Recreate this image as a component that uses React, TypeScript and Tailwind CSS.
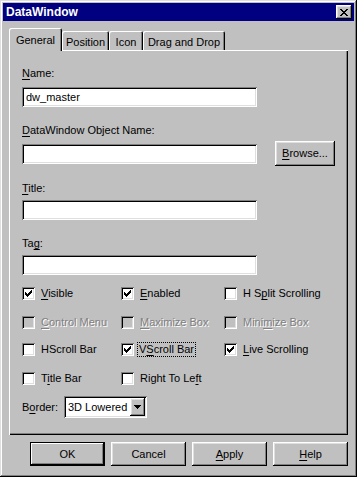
import React from "react";

const raised =
  "shadow-[inset_-1px_-1px_#000,inset_1px_1px_#fff,inset_-2px_-2px_#808080,inset_2px_2px_#dfdfdf]";
const sunken =
  "shadow-[inset_1px_1px_#808080,inset_-1px_-1px_#fff,inset_2px_2px_#000,inset_-2px_-2px_#dfdfdf]";
const embossed = "text-[#808080] [text-shadow:1px_1px_0_#fff]";

function Acc({ text, at }: { text: string; at: number }) {
  if (at < 0) return <>{text}</>;
  return (
    <>
      {text.slice(0, at)}
      <span className="underline underline-offset-[2px]">{text[at]}</span>
      {text.slice(at + 1)}
    </>
  );
}

function CheckMark() {
  return (
    <svg width="7" height="7" viewBox="0 0 7 7" shapeRendering="crispEdges">
      <path
        fill="#000"
        d="M6 0h1v1h-1z M5 1h2v1h-2z M0 2h1v1h-1z M4 2h3v1h-3z M0 3h2v1h-2z M3 3h3v1h-3z M0 4h5v1h-5z M1 5h3v1h-3z M2 6h1v1h-1z"
      />
    </svg>
  );
}

type Box = { label: string; at: number; checked?: boolean; disabled?: boolean; focus?: boolean };

function Check({ label, at, checked, disabled, focus }: Box) {
  return (
    <div className="flex h-[13px] items-center gap-[6px]">
      <div
        className={`flex h-[13px] w-[13px] shrink-0 items-center justify-center ${sunken} ${
          disabled ? "bg-[#c0c0c0]" : "bg-white"
        }`}
      >
        {checked ? <CheckMark /> : null}
      </div>
      <span
        className={`whitespace-nowrap leading-[13px] ${disabled ? embossed : "text-black"} ${
          focus ? "outline outline-1 outline-dotted outline-black px-[1px] -ml-[2px]" : ""
        }`}
      >
        <Acc text={label} at={at} />
      </span>
    </div>
  );
}

const rows: Box[][] = [
  [
    { label: "Visible", at: 0, checked: true },
    { label: "Enabled", at: 0, checked: true },
    { label: "H Split Scrolling", at: 3 },
  ],
  [
    { label: "Control Menu", at: 0, disabled: true },
    { label: "Maximize Box", at: 0, disabled: true },
    { label: "Minimize Box", at: 4, disabled: true },
  ],
  [
    { label: "HScroll Bar", at: -1 },
    { label: "VScroll Bar", at: 1, checked: true, focus: true },
    { label: "Live Scrolling", at: 0, checked: true },
  ],
  [
    { label: "Title Bar", at: 1 },
    { label: "Right To Left", at: 11 },
  ],
];

const rowGaps = ["mt-[12px]", "mt-[16px]", "mt-[14px]", "mt-[16px]"];

function Field({ value = "" }: { value?: string }) {
  return (
    <div className={`flex h-[20px] w-[235px] items-center bg-white pl-[4px] ${sunken}`}>
      <span className="leading-[13px]">{value}</span>
    </div>
  );
}

function Label({ text, at, className = "" }: { text: string; at: number; className?: string }) {
  return (
    <div className={`h-[13px] leading-[13px] ${className}`}>
      <Acc text={text} at={at} />
    </div>
  );
}

const tabs = [
  { name: "General", w: "w-[53px]" },
  { name: "Position", w: "w-[47px]" },
  { name: "Icon", w: "w-[34px]" },
  { name: "Drag and Drop", w: "w-[82px]" },
];

const buttons = [
  { name: "OK", at: -1, def: true },
  { name: "Cancel", at: -1 },
  { name: "Apply", at: 0 },
  { name: "Help", at: 0 },
];

export default function App() {
  return (
    <div
      className={`flex h-[477px] w-[357px] flex-col bg-[#c0c0c0] p-[3px] text-[11px] text-black shadow-[inset_-1px_-1px_#000,inset_1px_1px_#dfdfdf,inset_-2px_-2px_#808080,inset_2px_2px_#fff] [font-family:'Liberation_Sans',Arial,sans-serif]`}
    >
      {/* title bar */}
      <div className="flex h-[18px] items-center justify-between bg-[#000080] pl-[3px] pr-[2px]">
        <span className="text-[12px] font-bold leading-none text-white">DataWindow</span>
        <div className={`flex h-[14px] w-[16px] items-center justify-center bg-[#c0c0c0] ${raised}`}>
          <svg width="8" height="7" viewBox="0 0 8 7" shapeRendering="crispEdges">
            <path
              fill="#000"
              d="M0 0h2v1h-2z M6 0h2v1h-2z M1 1h2v1h-2z M5 1h2v1h-2z M2 2h4v1h-4z M3 3h2v1h-2z M2 4h4v1h-4z M1 5h2v1h-2z M5 5h2v1h-2z M0 6h2v1h-2z M6 6h2v1h-2z"
            />
          </svg>
        </div>
      </div>

      {/* tabs */}
      <div className="ml-[6px] mr-[6px] mt-[7px] flex h-[23px] items-end">
        {tabs.map((t, i) =>
          i === 0 ? (
            <div
              key={t.name}
              className={`flex h-[23px] ${t.w} items-start justify-center rounded-t-[2px] pt-[4px] shadow-[inset_1px_1px_#fff,inset_-1px_0_#000,inset_-2px_0_#808080]`}
            >
              General
            </div>
          ) : (
            <div
              key={t.name}
              className={`flex h-[20px] ${t.w} items-start justify-center rounded-t-[2px] border-b border-white pt-[3px] shadow-[inset_1px_1px_#fff,inset_-1px_0_#000,inset_-2px_0_#808080]`}
            >
              {t.name}
            </div>
          )
        )}
        <div className="flex-1 border-b border-white" />
      </div>

      {/* panel */}
      <div className="ml-[6px] mr-[6px] flex h-[384px] flex-col pl-[13px] pt-[16px] shadow-[inset_1px_0_#fff,inset_-1px_-1px_#000,inset_-2px_-2px_#808080]">
        <Label text="Name:" at={0} />
        <div className="mt-[7px]">
          <Field value="dw_master" />
        </div>
        <Label text="DataWindow Object Name:" at={0} className="mt-[17px]" />
        <div className="mt-[4px] flex h-[25px] items-center">
          <Field />
          <div className={`ml-[18px] flex h-[25px] w-[60px] items-center justify-center ${raised}`}>
            <Acc text="Browse..." at={0} />
          </div>
        </div>
        <Label text="Title:" at={0} className="mt-[16px]" />
        <div className="mt-[5px]">
          <Field />
        </div>
        <Label text="Tag:" at={2} className="mt-[17px]" />
        <div className="mt-[5px]">
          <Field />
        </div>

        {rows.map((r, i) => (
          <div key={i} className={`grid grid-cols-[99px_103px_1fr] ${rowGaps[i]}`}>
            {r.map((b) => (
              <Check key={b.label} {...b} />
            ))}
          </div>
        ))}

        <div className="mt-[11px] flex items-center">
          <span className="w-[42px] leading-[13px]">
            <Acc text="Border:" at={1} />
          </span>
          <div className={`flex h-[22px] w-[83px] items-center justify-between bg-white pl-[4px] pr-[2px] ${sunken}`}>
            <span className="leading-[13px]">3D Lowered</span>
            <div className={`flex h-[18px] w-[15px] items-center justify-center bg-[#c0c0c0] ${raised}`}>
              <svg width="7" height="4" viewBox="0 0 7 4" shapeRendering="crispEdges">
                <path fill="#000" d="M0 0h7v1h-7z M1 1h5v1h-5z M2 2h3v1h-3z M3 3h1v1h-1z" />
              </svg>
            </div>
          </div>
        </div>
      </div>

      {/* buttons */}
      <div className="mr-[6px] mt-[7px] flex justify-end gap-[6px]">
        {buttons.map((b) => (
          <div
            key={b.name}
            className={`flex h-[24px] w-[75px] items-center justify-center ${
              b.def
                ? "shadow-[inset_0_0_0_1px_#000,inset_-2px_-2px_#000,inset_2px_2px_#fff,inset_-3px_-3px_#808080]"
                : raised
            }`}
          >
            <Acc text={b.name} at={b.at} />
          </div>
        ))}
      </div>
    </div>
  );
}
